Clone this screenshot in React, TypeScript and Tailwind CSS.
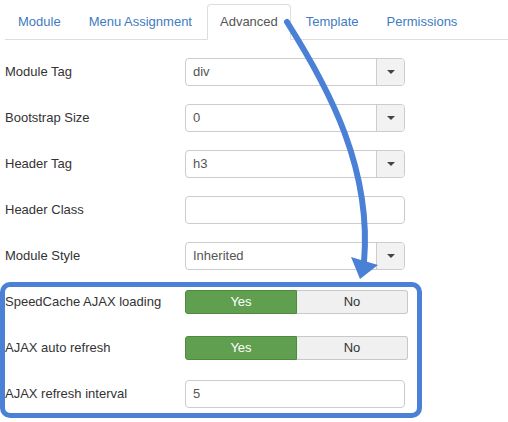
const tabs = ["Module", "Menu Assignment", "Advanced", "Template", "Permissions"];

const Caret = () => (
  <svg width="8" height="4" viewBox="0 0 8 4">
    <path d="M0 0 L8 0 L4 4 Z" fill="#444" />
  </svg>
);

const SelectBox = ({ value }: { value: string }) => (
  <div className="flex w-[220px] h-[28px] border border-[#ccc] rounded-[4px] bg-white overflow-hidden">
    <div className="flex-1 flex items-center pl-[7px] text-[#555]">{value}</div>
    <div className="w-[28px] flex items-center justify-center bg-[#f2f2f2] border-l border-[#ccc]">
      <Caret />
    </div>
  </div>
);

const TextBox = ({ value }: { value: string }) => (
  <div className="flex items-center w-[220px] h-[28px] border border-[#ccc] rounded-[4px] bg-white pl-[7px] text-[#555]">
    {value}
  </div>
);

const YesNo = () => (
  <div className="flex w-[223px] h-[24px]">
    <div className="w-[112px] flex items-center justify-center bg-[#5f9f4f] border border-[#4d8a3e] rounded-l-[3px] text-white">
      Yes
    </div>
    <div className="flex-1 flex items-center justify-center bg-[#f0f0f0] border border-l-0 border-[#c8c8c8] rounded-r-[3px] text-[#333]">
      No
    </div>
  </div>
);

const Row = ({ label, children }: { label: string; children: React.ReactNode }) => (
  <div className="flex items-center h-[28px]">
    <div className="w-[180px] text-[#333]">{label}</div>
    {children}
  </div>
);

export default function App() {
  return (
    <div
      className="relative w-[508px] h-[422px] bg-white overflow-hidden text-[13px] leading-[18px]"
      style={{ fontFamily: '"Liberation Sans", Arial, sans-serif' }}
    >
      <div className="pl-[5px] pt-[4px]">
        <ul className="flex border-b border-[#ddd]">
          {tabs.map((t) => (
            <li key={t} className="mr-[2px] -mb-px">
              <div
                className={
                  t === "Advanced"
                    ? "px-[12px] py-[8px] border border-[#ddd] border-b-white rounded-t-[4px] bg-white text-[#555]"
                    : "px-[12px] py-[8px] border border-transparent text-[#3f7bc0]"
                }
              >
                {t}
              </div>
            </li>
          ))}
        </ul>
      </div>

      <div className="flex flex-col gap-[18px] pl-[5px] mt-[18px]">
        <Row label="Module Tag">
          <SelectBox value="div" />
        </Row>
        <Row label="Bootstrap Size">
          <SelectBox value="0" />
        </Row>
        <Row label="Header Tag">
          <SelectBox value="h3" />
        </Row>
        <Row label="Header Class">
          <TextBox value="" />
        </Row>
        <Row label="Module Style">
          <SelectBox value="Inherited" />
        </Row>
        <Row label="SpeedCache AJAX loading">
          <YesNo />
        </Row>
        <Row label="AJAX auto refresh">
          <YesNo />
        </Row>
        <Row label="AJAX refresh interval">
          <TextBox value="5" />
        </Row>
      </div>

      {/* annotation overlay */}
      <div className="absolute left-0 top-[282px] w-[422px] h-[136px] border-[5px] border-[#4a80d5] rounded-[10px] pointer-events-none" />
      <svg className="absolute left-0 top-0 pointer-events-none" width="508" height="422">
        <path
          d="M287 22 C 330 90, 372 170, 364 262"
          fill="none"
          stroke="#4a80d5"
          strokeWidth="6"
          strokeLinecap="round"
        />
        <path d="M351 257 L378 265 L360 279 Z" fill="#4a80d5" />
      </svg>
    </div>
  );
}
